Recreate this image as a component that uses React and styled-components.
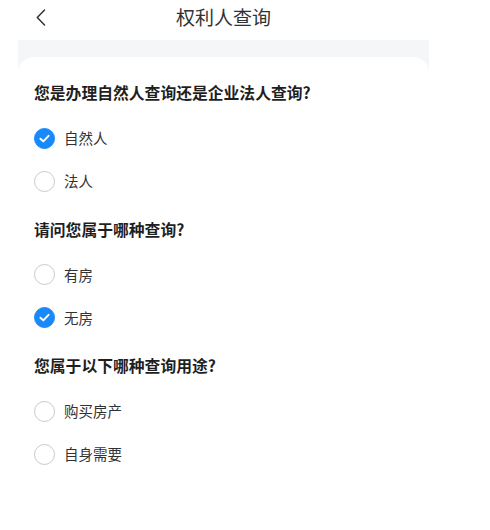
import React, { useState } from 'react';
import styled, { createGlobalStyle } from 'styled-components';

const GlobalStyle = createGlobalStyle`
  body {
    margin: 0;
    background: #fff;
    font-family: "Noto Sans CJK SC", "Noto Sans", sans-serif;
    color: #323233;
  }
`;

const Page = styled.div`
  width: 411px;
  margin-left: 18px;
`;

const Header = styled.div`
  position: relative;
  height: 34px;
  display: flex;
  align-items: center;
  justify-content: center;
`;

const Back = styled.button`
  position: absolute;
  left: 16px;
  top: 8px;
  width: 14px;
  height: 18px;
  padding: 0;
  border: 0;
  background: transparent;
  display: flex;
  align-items: center;
  justify-content: center;
  cursor: pointer;
`;

const Title = styled.h1`
  margin: 0;
  font-size: 19px;
  font-weight: normal;
  line-height: 34px;
  color: #323233;
`;

const Body = styled.div`
  margin-top: 6px;
  background: #f5f6f8;
  padding-top: 17px;
`;

const Card = styled.div`
  background: #fff;
  border-radius: 16px 16px 0 0;
  padding: 9px 16px 40px;
  min-height: 420px;
`;

const Question = styled.h2`
  margin: 0;
  padding: 16px 0 12.5px;
  font-size: 15.8px;
  line-height: 22px;
  font-weight: 700;
  color: #1f1f1f;
`;

const Option = styled.label`
  display: flex;
  align-items: center;
  height: 43px;
  cursor: pointer;
`;

const Circle = styled.span`
  box-sizing: border-box;
  width: 21px;
  height: 21px;
  border-radius: 50%;
  flex: none;
  display: flex;
  align-items: center;
  justify-content: center;
  background: ${({ checked }) => (checked ? '#1989fa' : '#fff')};
  border: 1px solid ${({ checked }) => (checked ? '#1989fa' : '#c8c9cc')};
`;

const Label = styled.span`
  margin-left: 9px;
  font-size: 14.5px;
  line-height: 20px;
  color: #323233;
`;

const questions = [
  { q: '您是办理自然人查询还是企业法人查询?', options: ['自然人', '法人'], init: 0 },
  { q: '请问您属于哪种查询?', options: ['有房', '无房'], init: 1 },
  { q: '您属于以下哪种查询用途?', options: ['购买房产', '自身需要'], init: -1 },
];

const Check = () => (
  <svg width="13" height="13" viewBox="0 0 13 13">
    <path d="M2.4 6.7 L5.3 9.4 L10.6 3.8" fill="none" stroke="#fff" strokeWidth="1.9" strokeLinecap="round" strokeLinejoin="round" />
  </svg>
);

const App = () => {
  const [answers, setAnswers] = useState(questions.map((q) => q.init));

  const pick = (qi, oi) => {
    const next = [...answers];
    next[qi] = oi;
    setAnswers(next);
  };

  return (
    <Page>
      <GlobalStyle />
      <Header>
        <Back aria-label="返回">
          <svg width="10" height="17" viewBox="0 0 10 17">
            <path d="M8.5 1 L1.3 8.5 L8.5 16" fill="none" stroke="#333" strokeWidth="1.5" strokeLinecap="round" strokeLinejoin="round" />
          </svg>
        </Back>
        <Title>权利人查询</Title>
      </Header>
      <Body>
        <Card>
          {questions.map((item, qi) => (
            <div key={qi}>
              <Question>{item.q}</Question>
              {item.options.map((opt, oi) => (
                <Option key={opt} onClick={() => pick(qi, oi)}>
                  <Circle checked={answers[qi] === oi}>
                    {answers[qi] === oi && <Check />}
                  </Circle>
                  <Label>{opt}</Label>
                </Option>
              ))}
            </div>
          ))}
        </Card>
      </Body>
    </Page>
  );
};

export default App;
